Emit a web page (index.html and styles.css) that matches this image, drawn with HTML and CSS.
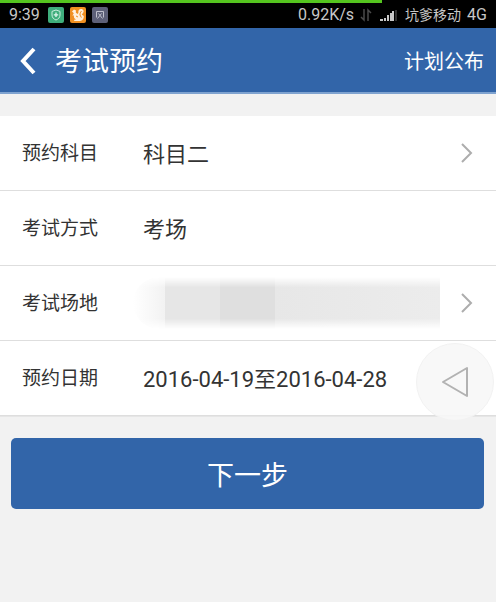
FILE: index.html
```
<!DOCTYPE html>
<html lang="zh-CN">
  <head>
    <meta charset="utf-8">
    <meta name="viewport" content="width=device-width, initial-scale=1">
    <title>考试预约</title>
    <link rel="stylesheet" href="styles.css">
  </head>
  <body>
    <div class="status-bar">
      <div class="progress"></div>
      <span class="clock">9:39</span>
      <svg class="app-icon" width="16" height="16" viewBox="0 0 16 16">
        <rect width="16" height="16" rx="2" fill="#3fae7c"/>
        <path d="M8 3 L12 4.4 V8 C12 10.6 10.2 12.2 8 13 C5.8 12.2 4 10.6 4 8 V4.4 Z" fill="none" stroke="#c9eedd"/>
        <path d="M8 5.6 V10 M5.8 7.8 H10.2" stroke="#e2f7ee" stroke-width="1.3"/>
      </svg>
      <svg class="app-icon" width="16" height="16" viewBox="0 0 16 16">
        <rect width="16" height="16" rx="2" fill="#f09022"/>
        <path d="M2 4.4 L4 2.4 L6 3.4 L5.8 5.4 L7.4 7 L8.4 6 C8 3.6 9.2 2 11 2 C13.4 2 14.4 4.4 13 6 L11.8 7.4 L13.8 9 C14 12 12.4 13.8 10 14 H4 L4.6 12.6 L6.2 12.4 C4.2 11.6 3.6 10.2 4 8.4 L2.4 8.6 L3.8 6.2 Z" fill="#fff0dc"/>
        <path d="M11.6 4 C10.6 5 9.8 6.4 10 8 L11.4 10.6 M6 9 L8 10" fill="none" stroke="#f09022"/>
      </svg>
      <svg class="app-icon" width="16" height="16" viewBox="0 0 16 16">
        <rect width="16" height="16" rx="2" fill="#5d6078"/>
        <path d="M4.5 10.5 V4.5 H11.5 V10.5 M6.5 6.5 L10.5 11.5 M9.5 6.5 L5.5 11.5" fill="none" stroke="#c0c1cd"/>
      </svg>
      <span class="speed">0.92K/s</span>
      <svg class="transfer" width="12" height="14" viewBox="0 0 12 14">
        <path d="M4 1 V12 L1 9 M8 13 V2 L11 5" fill="none" stroke="#4a4a4a" stroke-width="1.5"/>
      </svg>
      <svg class="signal" width="17" height="12" viewBox="0 0 17 12">
        <path d="M0 12 V10 H3 V12 Z M4 12 V9 H6 V12 Z M7 12 V6 H9 V12 Z M10 12 V4 H12 V12 Z M12 12 V2 H14 V12 Z" fill="#c8c8c8"/>
        <rect x="15" y="1" width="2" height="11" fill="#303030"/>
      </svg>
      <span class="carrier">坑爹移动</span>
      <span class="network">4G</span>
    </div>

    <header class="header">
      <button type="button" class="back" aria-label="返回">
        <svg width="17" height="28" viewBox="0 0 17 28">
          <path d="M14 2 L3 14 L14 26" fill="none" stroke="#fff" stroke-width="4"/>
        </svg>
      </button>
      <h1>考试预约</h1>
      <a class="plan-link" href="#">计划公布</a>
    </header>

    <main>
      <form id="bookingForm">
        <div class="list">
          <button type="button" class="row">
            <span class="label">预约科目</span>
            <span class="value">科目二</span>
            <svg class="arrow" width="14" height="22" viewBox="0 0 14 22">
              <path d="M2 2 L11 11 L2 20" fill="none" stroke="#adadad" stroke-width="2"/>
            </svg>
          </button>
          <div class="row">
            <span class="label">考试方式</span>
            <span class="value">考场</span>
          </div>
          <button type="button" class="row" aria-label="考试场地">
            <span class="label">考试场地</span>
            <span class="hidden-place">
              <span class="block light"></span>
              <span class="block"></span>
              <span class="block dark"></span>
              <span class="block wide"></span>
            </span>
            <svg class="arrow" width="14" height="22" viewBox="0 0 14 22">
              <path d="M2 2 L11 11 L2 20" fill="none" stroke="#adadad" stroke-width="2"/>
            </svg>
          </button>
          <div class="row">
            <span class="label">预约日期</span>
            <span class="value">2016-04-19至2016-04-28</span>
          </div>
          <button type="button" class="float-back" aria-label="后退">
            <svg width="28" height="32" viewBox="0 0 28 32">
              <path d="M2 16 L26 2 V30 Z" fill="none" stroke="#b2b2b2" stroke-width="2" stroke-linejoin="round"/>
            </svg>
          </button>
        </div>
        <button type="submit" class="next">下一步</button>
      </form>
    </main>
  </body>
</html>
```
FILE: styles.css
```
* {
  box-sizing: border-box;
}
body {
  margin: 0;
  background-color: #f2f2f2;
  color: #333;
  font-family: Roboto, "Noto Sans CJK SC", sans-serif;
}
button {
  border: none;
  padding: 0;
  background: none;
  color: inherit;
  font-family: inherit;
  cursor: pointer;
}
svg {
  display: block;
  flex: none;
}

/* Phone status bar */
.status-bar {
  position: relative;
  display: flex;
  align-items: center;
  height: 28px;
  padding: 1px 9px 0;
  background-color: #000;
  color: #c8c8c8;
  font-size: 16px;
  line-height: 24px;
}
.progress {
  position: absolute;
  top: 0;
  left: 0;
  width: 77%;
  height: 3px;
  background-color: #55c51f;
}
.clock {
  margin-right: 2px;
}
.app-icon {
  margin-left: 6px;
}
.speed {
  margin-left: auto;
}
.transfer {
  margin-left: 6px;
}
.signal {
  margin-left: 8px;
}
.carrier {
  margin-left: 8px;
  font-size: 14px;
}
.network {
  margin-left: 6px;
}

/* Title bar */
.header {
  display: flex;
  align-items: center;
  height: 66px;
  padding: 2px 12px 0 20px;
  border-bottom: 2px solid #7fa3d0;
  background-color: #3265a9;
  color: #fff;
}
h1 {
  margin: 0 auto 0 18px;
  padding-top: 2px;
  font-size: 27px;
  font-weight: 400;
  line-height: 40px;
}
.plan-link {
  padding-top: 2px;
  color: #fff;
  font-size: 20px;
  line-height: 30px;
  text-decoration: none;
}

/* Booking fields */
.list {
  position: relative;
  margin-top: 22px;
  border-bottom: 1px solid #e6e6e6;
  background-color: #fff;
}
.row {
  display: flex;
  align-items: center;
  width: 100%;
  height: 75px;
  padding: 0 22px;
  border-bottom: 1px solid #dedede;
  text-align: left;
}
.label,
.value {
  padding-bottom: 3px;
}
.label {
  width: 121px;
  font-size: 19px;
}
.value {
  flex: 1;
  font-size: 22px;
}
.hidden-place {
  display: flex;
  flex: 1;
  height: 52px;
  margin: 0 20px 0 -10px;
  border-radius: 26px 0 0 26px;
  overflow: hidden;
  -webkit-mask-image: linear-gradient(transparent, #000 20%, #000 80%, transparent);
  mask-image: linear-gradient(transparent, #000 20%, #000 80%, transparent);
}
.block {
  width: 55px;
  background-color: #e6e6e6;
}
.block.light {
  width: 32px;
  background: linear-gradient(to right, #fff, #f2f2f2);
}
.block.dark {
  background-color: #dfdfdf;
}
.block.wide {
  flex: 1;
  background: linear-gradient(to right, #e7e7e7, #ececec);
}

/* Floating back key */
.float-back {
  position: absolute;
  right: 2px;
  bottom: -5px;
  display: flex;
  align-items: center;
  justify-content: center;
  width: 78px;
  height: 78px;
  border: 1px solid #f2f2f2;
  border-radius: 50%;
  background-color: rgba(247, 247, 247, 0.9);
}

.next {
  display: block;
  width: calc(100% - 23px);
  height: 71px;
  margin: 21px 12px 0 11px;
  border-radius: 5px;
  background-color: #3265a9;
  color: #fff;
  font-size: 27px;
}
```
